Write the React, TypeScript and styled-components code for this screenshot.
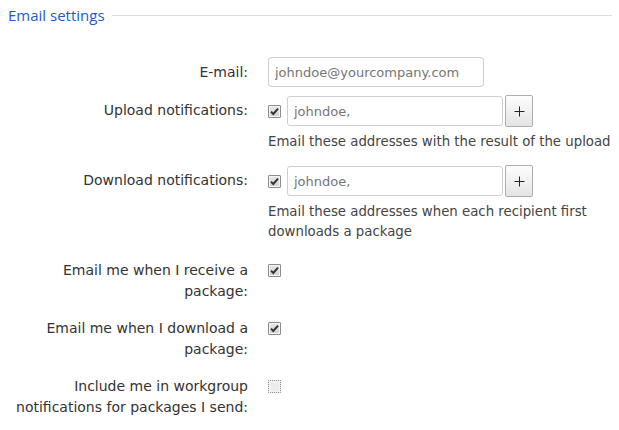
import React, { FC } from "react"
import styled, { createGlobalStyle } from "styled-components"

const GlobalStyle = createGlobalStyle`
  body {
    margin: 0;
    background: #fff;
    font-family: "DejaVu Sans", Verdana, sans-serif;
    font-size: 13px;
    color: #333;
  }
`

const StyledPage = styled.div`
  padding: 5px 7px 0 8px;
`

const StyledLegend = styled.div`
  display: flex;
  align-items: center;
  gap: 7px;
  height: 20px;
`

const StyledLegendText = styled.span`
  font-family: "Open Sans", "Liberation Sans", sans-serif;
  font-size: 15px;
  color: #1f5bc4;
`

const StyledRule = styled.div`
  flex: 1;
  height: 1px;
  background: #dcdcdc;
`

const StyledForm = styled.div`
  display: flex;
  flex-direction: column;
  margin-top: 32px;
`

const StyledRow = styled.div<{ $space: number }>`
  display: grid;
  grid-template-columns: 240px 1fr;
  column-gap: 20px;
  margin-top: ${(p) => p.$space}px;
`

const StyledLabel = styled.div<{ $inline?: boolean }>`
  text-align: right;
  font-size: 14px;
  line-height: 21px;
  padding-top: ${(p) => (p.$inline ? 4.5 : 0)}px;
`

const StyledControls = styled.div`
  display: flex;
  flex-direction: column;
`

const StyledLine = styled.div`
  display: flex;
  align-items: center;
`

const StyledInput = styled.input`
  box-sizing: border-box;
  width: 216px;
  height: 30px;
  padding: 0 6px;
  border: 1px solid #cfcfcf;
  border-radius: 3px;
  font-family: "DejaVu Sans", Verdana, sans-serif;
  font-size: 13px;
  color: #757575;
  background: #fff;
  outline: none;
`

const StyledAdd = styled.button`
  box-sizing: border-box;
  width: 28px;
  height: 32px;
  margin-left: 2px;
  align-self: flex-start;
  padding: 0;
  border: 1px solid #adadad;
  border-radius: 2px;
  background: linear-gradient(#fdfdfd, #e4e4e4);
  display: grid;
  place-items: center;
`

const StyledBox = styled.span<{ $checked: boolean; $top?: number }>`
  box-sizing: border-box;
  display: grid;
  place-items: center;
  width: 13px;
  height: 13px;
  margin-top: ${(p) => p.$top ?? 0}px;
  margin-right: 6px;
  border: 1px ${(p) => (p.$checked ? "solid" : "dotted")} #8c8c8c;
  border-radius: 1px;
  background: ${(p) => (p.$checked ? "linear-gradient(#e8e8e8, #d2d2d2)" : "#ececec")};
  box-shadow: inset 0 0 0 1px #f4f4f4;
`

const StyledHelp = styled.div<{ $width?: number }>`
  margin-top: 5px;
  margin-bottom: 5px;
  font-size: 13.3px;
  line-height: 20px;
  color: #444;
  max-width: ${(p) => p.$width ?? 400}px;
`

const Check: FC<{ checked: boolean; top?: number }> = ({ checked, top }) => (
  <StyledBox $checked={checked} $top={top}>
    {checked && (
      <svg width="9" height="9" viewBox="0 0 9 9">
        <path d="M1 4.6 L3.3 7 L8 1.6" fill="none" stroke="#333" strokeWidth="2" />
      </svg>
    )}
  </StyledBox>
)

const PlusButton: FC = () => (
  <StyledAdd type="button">
    <svg width="11" height="11" viewBox="0 0 11 11">
      <path d="M5.5 0.5 V10.5 M0.5 5.5 H10.5" stroke="#222" strokeWidth="1" />
    </svg>
  </StyledAdd>
)

const NotifyRow: FC<{ label: string; help: string; space: number; helpWidth?: number }> = ({
  label,
  help,
  space,
  helpWidth,
}) => (
  <StyledRow $space={space}>
    <StyledLabel $inline>{label}</StyledLabel>
    <StyledControls>
      <StyledLine>
        <Check checked />
        <StyledInput defaultValue="johndoe," />
        <PlusButton />
      </StyledLine>
      <StyledHelp $width={helpWidth}>{help}</StyledHelp>
    </StyledControls>
  </StyledRow>
)

const CheckRow: FC<{ label: string; checked: boolean; space: number }> = ({ label, checked, space }) => (
  <StyledRow $space={space}>
    <StyledLabel>{label}</StyledLabel>
    <StyledControls>
      <Check checked={checked} top={4} />
    </StyledControls>
  </StyledRow>
)

const App: FC = () => (
  <StyledPage>
    <GlobalStyle />
    <StyledLegend>
      <StyledLegendText>Email settings</StyledLegendText>
      <StyledRule />
    </StyledLegend>
    <StyledForm>
      <StyledRow $space={0}>
        <StyledLabel $inline>E-mail:</StyledLabel>
        <StyledControls>
          <StyledInput defaultValue="johndoe@yourcompany.com" />
        </StyledControls>
      </StyledRow>
      <NotifyRow
        space={8}
        label="Upload notifications:"
        help="Email these addresses with the result of the upload"
      />
      <NotifyRow
        space={8}
        label="Download notifications:"
        help="Email these addresses when each recipient first downloads a package"
        helpWidth={340}
      />
      <CheckRow space={13} label="Email me when I receive a package:" checked />
      <CheckRow space={16} label="Email me when I download a package:" checked />
      <CheckRow space={16} label="Include me in workgroup notifications for packages I send:" checked={false} />
    </StyledForm>
  </StyledPage>
)

export default App
